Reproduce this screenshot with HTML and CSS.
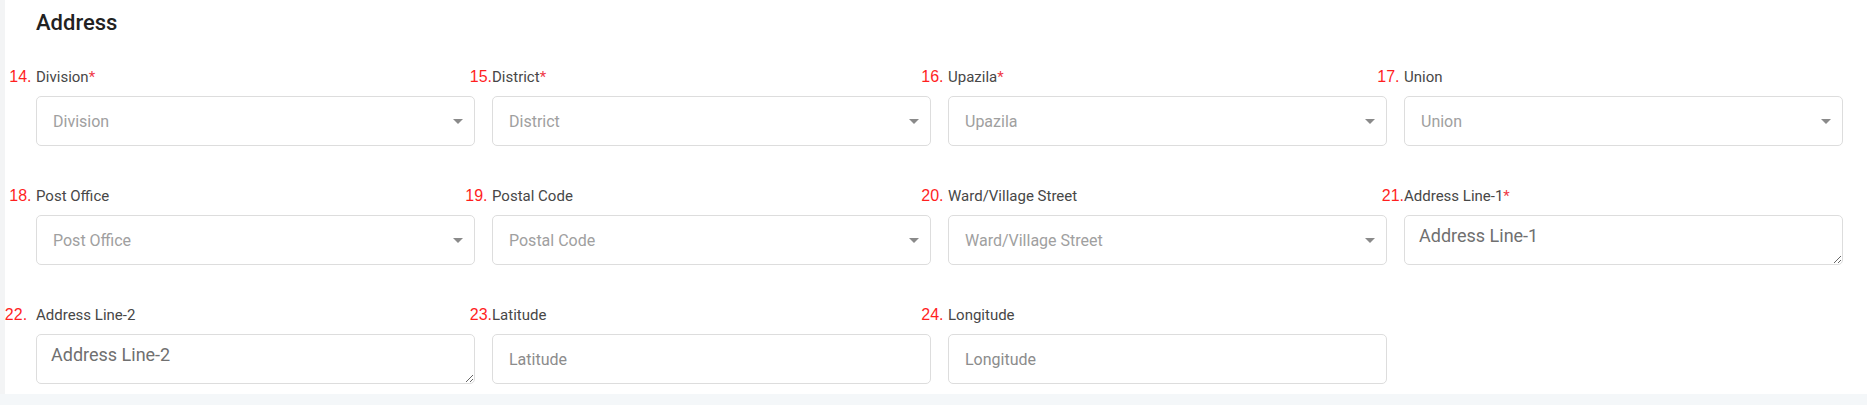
FILE: index.html
```html
<!DOCTYPE html>
<html lang="en">
<head>
    <meta charset="UTF-8">
    <meta name="viewport" content="width=device-width, initial-scale=1.0">
    <title>Address</title>
    <link rel="stylesheet" href="styles.css">
</head>
<body>
    <div class="page">
        <div class="card">
            <h2 class="card-title">Address</h2>

            <div class="form-grid">
                <div class="field">
                    <label class="field-label"><span class="num">14.&nbsp;</span>Division<span class="req">*</span></label>
                    <div class="select"><span class="select-text">Division</span><span class="caret"></span></div>
                </div>
                <div class="field">
                    <label class="field-label"><span class="num">15.</span>District<span class="req">*</span></label>
                    <div class="select"><span class="select-text">District</span><span class="caret"></span></div>
                </div>
                <div class="field">
                    <label class="field-label"><span class="num">16.&nbsp;</span>Upazila<span class="req">*</span></label>
                    <div class="select"><span class="select-text">Upazila</span><span class="caret"></span></div>
                </div>
                <div class="field">
                    <label class="field-label"><span class="num">17.&nbsp;</span>Union</label>
                    <div class="select"><span class="select-text">Union</span><span class="caret"></span></div>
                </div>

                <div class="field">
                    <label class="field-label"><span class="num">18.&nbsp;</span>Post Office</label>
                    <div class="select"><span class="select-text">Post Office</span><span class="caret"></span></div>
                </div>
                <div class="field">
                    <label class="field-label"><span class="num">19.&nbsp;</span>Postal Code</label>
                    <div class="select"><span class="select-text">Postal Code</span><span class="caret"></span></div>
                </div>
                <div class="field">
                    <label class="field-label"><span class="num">20.&nbsp;</span>Ward/Village Street</label>
                    <div class="select"><span class="select-text">Ward/Village Street</span><span class="caret"></span></div>
                </div>
                <div class="field">
                    <label class="field-label"><span class="num">21.</span>Address Line-1<span class="req">*</span></label>
                    <textarea class="textarea" placeholder="Address Line-1"></textarea>
                </div>

                <div class="field">
                    <label class="field-label"><span class="num">22.&nbsp;&nbsp;</span>Address Line-2</label>
                    <textarea class="textarea" placeholder="Address Line-2"></textarea>
                </div>
                <div class="field">
                    <label class="field-label"><span class="num">23.</span>Latitude</label>
                    <input class="input" type="text" placeholder="Latitude">
                </div>
                <div class="field">
                    <label class="field-label"><span class="num">24.&nbsp;</span>Longitude</label>
                    <input class="input" type="text" placeholder="Longitude">
                </div>
            </div>
        </div>
    </div>
</body>
</html>
```

FILE: styles.css
```css
body {
    margin: 0;
    font-family: Roboto, "Liberation Sans", sans-serif;
    background: #f4f7f9;
    color: #333;
}
.page {
    padding-left: 5px;
    background: #f3f4f5;
}
.card {
    background: #fff;
    padding: 10px 24px 10px 31px;
}
.card-title {
    margin: 0 0 31px 0;
    font-size: 22px;
    line-height: 26px;
    font-weight: 500;
    color: #222;
}
.form-grid {
    display: grid;
    grid-template-columns: repeat(4, 1fr);
    column-gap: 17px;
    row-gap: 40px;
}
.field-label {
    position: relative;
    display: block;
    font-size: 15px;
    line-height: 20px;
    color: #474747;
    margin-bottom: 9px;
}
.num {
    position: absolute;
    right: 100%;
    top: 0;
    white-space: nowrap;
    font-family: "Liberation Sans", sans-serif;
    font-size: 16px;
    line-height: 20px;
    color: #ff1f1f;
}
.req {
    color: #ef3b48;
}
.select,
.input,
.textarea {
    box-sizing: border-box;
    width: 100%;
    height: 50px;
    border: 1px solid #dddddd;
    border-radius: 5px;
    background: #fff;
}
.select {
    display: flex;
    align-items: center;
    justify-content: space-between;
    padding: 0 11px 0 16px;
}
.select-text {
    font-size: 16px;
    color: #a0a0a0;
}
.caret {
    width: 0;
    height: 0;
    border-left: 5px solid transparent;
    border-right: 5px solid transparent;
    border-top: 5px solid #8a8a8a;
}
.input {
    display: block;
    padding: 0 16px;
    font-family: Roboto, sans-serif;
    font-size: 16px;
    color: #333;
    outline: none;
}
.input::placeholder {
    color: #8c8c8c;
}
.textarea {
    display: block;
    padding: 6px 14px;
    font-family: Roboto, sans-serif;
    font-size: 18px;
    line-height: 1.5;
    color: #333;
    resize: vertical;
    outline: none;
}
.textarea::placeholder {
    color: #707070;
}
```
